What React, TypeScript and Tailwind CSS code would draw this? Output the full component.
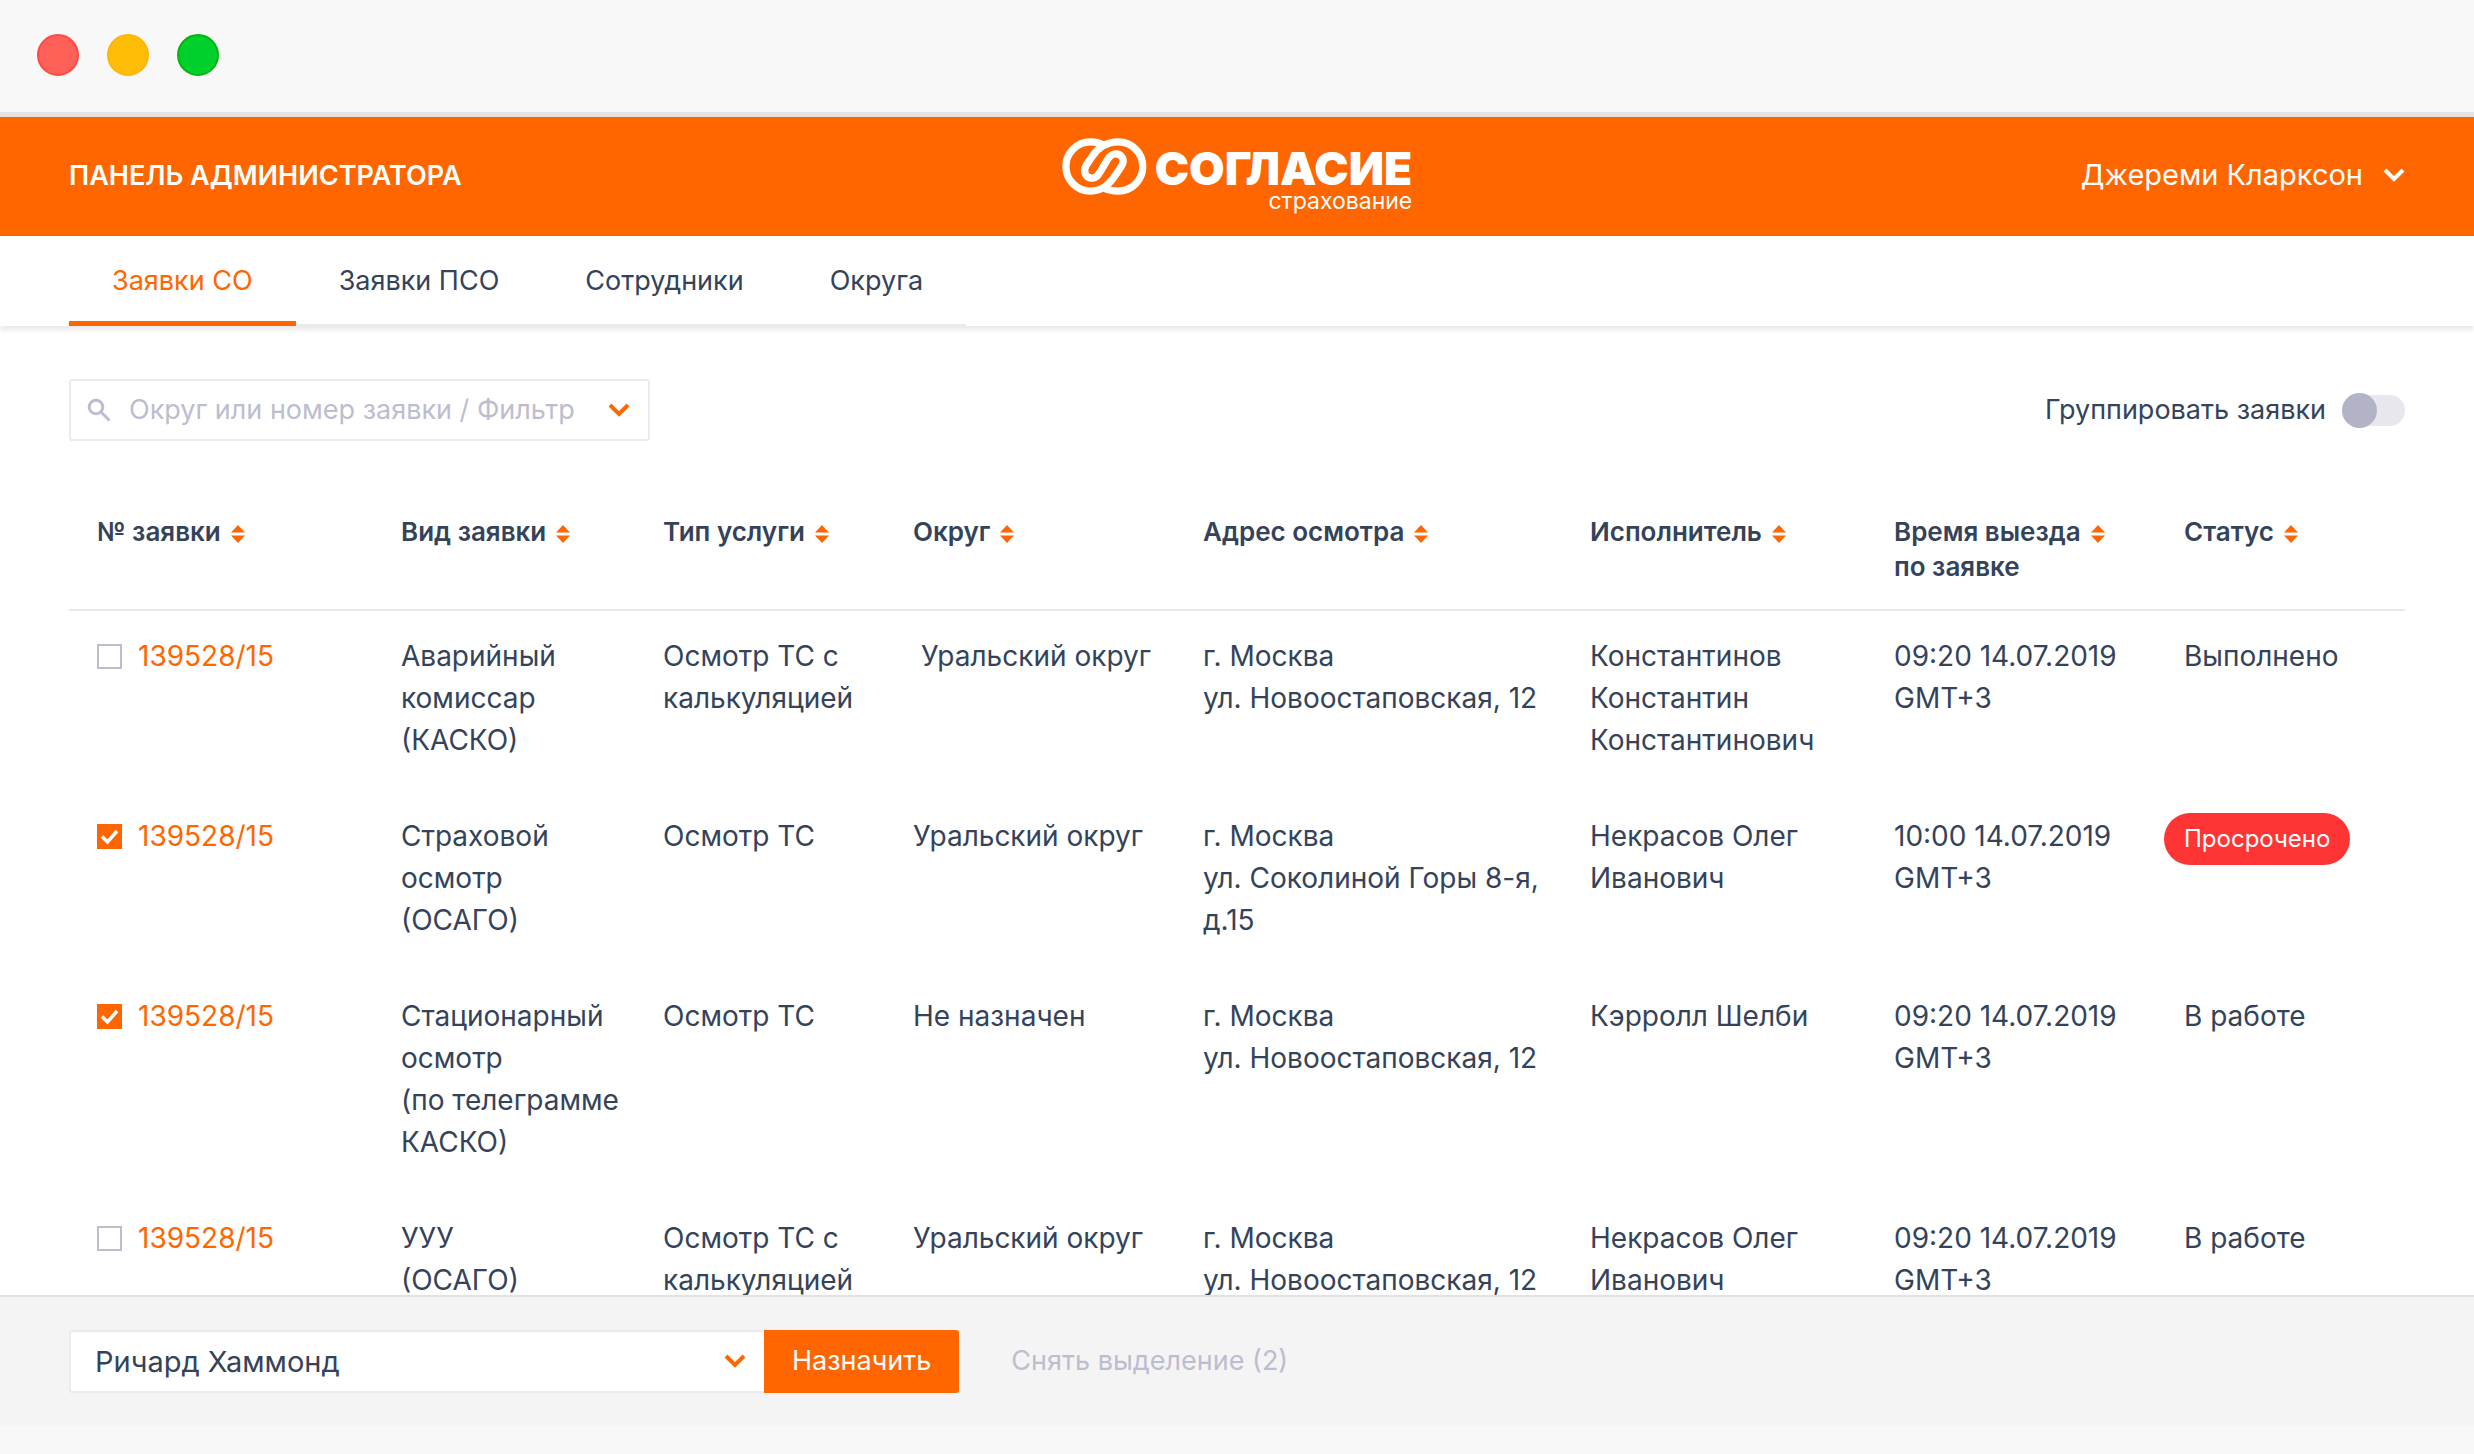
import { useState } from "react";
import clsx from "clsx";

type Request = {
  id: number;
  number: string;
  kind: string;
  service: string;
  district: string;
  address: string;
  assignee: string;
  time: string;
  status: string;
  overdue?: boolean;
};

const tabs = ["Заявки СО", "Заявки ПСО", "Сотрудники", "Округа"];

const columns = [
  { title: "№ заявки", width: "w-[332px]" },
  { title: "Вид заявки", width: "w-[262px]" },
  { title: "Тип услуги", width: "w-[250px]" },
  { title: "Округ", width: "w-[290px]" },
  { title: "Адрес осмотра", width: "w-[387px]" },
  { title: "Исполнитель", width: "w-[304px]" },
  { title: "Время выезда", subtitle: "по заявке", width: "w-[290px]" },
  { title: "Статус", width: "w-[221px]" },
];

const requests: Request[] = [
  {
    id: 1,
    number: "139528/15",
    kind: "Аварийный\nкомиссар\n(КАСКО)",
    service: "Осмотр ТС с\nкалькуляцией",
    district: "\u00a0Уральский округ",
    address: "г. Москва\nул. Новоостаповская, 12",
    assignee: "Константинов\nКонстантин\nКонстантинович",
    time: "09:20 14.07.2019\nGMT+3",
    status: "Выполнено",
  },
  {
    id: 2,
    number: "139528/15",
    kind: "Страховой\nосмотр\n(ОСАГО)",
    service: "Осмотр ТС",
    district: "Уральский округ",
    address: "г. Москва\nул. Соколиной Горы 8-я,\nд.15",
    assignee: "Некрасов Олег\nИванович",
    time: "10:00 14.07.2019\nGMT+3",
    status: "Просрочено",
    overdue: true,
  },
  {
    id: 3,
    number: "139528/15",
    kind: "Стационарный\nосмотр\n(по телеграмме\nКАСКО)",
    service: "Осмотр ТС",
    district: "Не назначен",
    address: "г. Москва\nул. Новоостаповская, 12",
    assignee: "Кэрролл Шелби",
    time: "09:20 14.07.2019\nGMT+3",
    status: "В работе",
  },
  {
    id: 4,
    number: "139528/15",
    kind: "УУУ\n(ОСАГО)",
    service: "Осмотр ТС с\nкалькуляцией",
    district: "Уральский округ",
    address: "г. Москва\nул. Новоостаповская, 12",
    assignee: "Некрасов Олег\nИванович",
    time: "09:20 14.07.2019\nGMT+3",
    status: "В работе",
  },
];

function Chevron({ className }: { className?: string }) {
  return (
    <svg
      viewBox="0 0 22 14"
      className={clsx("h-[14px] w-[22px] shrink-0", className)}
      fill="none"
      stroke="currentColor"
      strokeWidth="4"
      aria-hidden="true"
    >
      <path d="M2 2l9 9 9-9" />
    </svg>
  );
}

function SortIcon() {
  return (
    <svg
      viewBox="0 0 14 18"
      className="mt-1 h-[18px] w-[14px] text-[#ff6600]"
      fill="currentColor"
      aria-hidden="true"
    >
      <path d="M7 0l7 7.5H0zM7 18l7-7.5H0z" />
    </svg>
  );
}

function Logo() {
  return (
    <a href="#" className="flex items-start gap-2 pt-[21px]">
      <svg
        viewBox="28 22 255 172"
        className="h-[57px] w-[85px]"
        fill="none"
        stroke="currentColor"
        strokeWidth="22"
        aria-hidden="true"
      >
        <path d="M153 44C142 37 128 34 113 34A74 74 0 0 0 113 182C150 182 170 160 187 136L206 108C220 86 206 70 189 70C178 70 171 77 164 88L146 118C139 130 133 142 119 143C102 144 88 126 100 105L118 78C133 56 155 34 197 34A74 74 0 0 1 197 182C180 182 166 179 153 172" />
      </svg>
      <span className="flex flex-col items-end pt-[9px]">
        <span className="text-[46px] leading-[42px] font-black">СОГЛАСИЕ</span>
        <span className="text-[23px] leading-6">страхование</span>
      </span>
    </a>
  );
}

function Header() {
  return (
    <header className="grid h-[119px] grid-cols-[1fr_auto_1fr] bg-[#ff6600] px-[69px] text-white">
      <h1 className="self-center text-[27px] font-semibold">ПАНЕЛЬ АДМИНИСТРАТОРА</h1>
      <Logo />
      <button className="flex items-center gap-5 self-center justify-self-end pb-1 text-[29px]">
        Джереми Кларксон
        <Chevron />
      </button>
    </header>
  );
}

function Tabs() {
  return (
    <div className="relative flex h-[90px] bg-white px-[69px] shadow-[0_4px_5px_rgba(0,0,0,0.09)]">
      <nav className="flex shadow-[inset_0_-2px_0_#e9e9ee]">
        {tabs.map((tab, i) => (
          <a
            key={tab}
            href="#"
            className={clsx(
              "flex items-center border-b-[5px] px-[43px] pt-[6px] text-[27px]",
              i === 0 ? "border-[#ff6600] text-[#ff6600]" : "border-transparent"
            )}
          >
            {tab}
          </a>
        ))}
      </nav>
    </div>
  );
}

export default function App() {
  const [selected, setSelected] = useState<number[]>([2, 3]);

  const toggle = (id: number) =>
    setSelected((ids) => (ids.includes(id) ? ids.filter((i) => i !== id) : [...ids, id]));

  return (
    <div className="flex h-screen flex-col bg-[#f8f8f8] font-['Inter',sans-serif] text-[28px] text-[#34435a]">
      {/* Window bar */}
      <div className="flex h-[117px] shrink-0 items-center gap-7 border-b-[5px] border-[#e4e4e4] px-[37px] pb-[2px]">
        <span className="size-[42px] rounded-full border-2 border-[#ff4a44] bg-[#ff6159]" />
        <span className="size-[42px] rounded-full border-2 border-[#ffb40a] bg-[#ffbd08]" />
        <span className="size-[42px] rounded-full border-2 border-[#07b40c] bg-[#00d02b]" />
      </div>

      <Header />
      <Tabs />

      <main className="min-h-0 flex-1 overflow-hidden bg-white px-[69px] pt-[53px]">
        <div className="flex items-center justify-between text-[27px]">
          <div className="flex h-[62px] w-[581px] items-center rounded-[3px] border-2 border-[#ebebef] px-4">
            <svg
              viewBox="0 0 24 24"
              className="size-6 shrink-0 text-[#bdbdd0]"
              fill="none"
              stroke="currentColor"
              strokeWidth="3"
              aria-hidden="true"
            >
              <circle cx="9" cy="9" r="6.8" />
              <path d="M14 14l8.500 8.500" />
            </svg>
            <input
              type="text"
              aria-label="Поиск заявок"
              placeholder="Округ или номер заявки / Фильтр"
              className="min-w-0 flex-1 pl-[18px] outline-none placeholder:text-[#bdbdd0]"
            />
            <button aria-label="Открыть фильтр" className="px-[2px] text-[#ff6600]">
              <Chevron />
            </button>
          </div>

          <label className="flex items-center gap-4">
            Группировать заявки
            <input
              type="checkbox"
              role="switch"
              className="relative h-[31px] w-[63px] appearance-none rounded-full bg-[#e8e7ed] before:absolute before:-top-[2px] before:left-0 before:size-[35px] before:rounded-full before:bg-[#b2b3c6] checked:before:left-7 checked:before:bg-[#ff6600]"
            />
          </label>
        </div>

        <table className="mt-[73px] w-full table-fixed">
          <thead>
            <tr className="border-b-2 border-[#e9e9ec] text-left align-top text-[26px] leading-[35px]">
              {columns.map((column, i) => (
                <th
                  key={column.title}
                  className={clsx("pb-[25px] font-semibold", column.width, i === 0 && "pl-7")}
                >
                  <button className="flex items-center gap-[10px] whitespace-nowrap">
                    {column.title}
                    <SortIcon />
                  </button>
                  {column.subtitle}
                </th>
              ))}
            </tr>
          </thead>
          <tbody className="align-top leading-[42px] whitespace-pre-line">
            {requests.map((item) => (
              <tr key={item.id}>
                <td className="pt-6 pb-[30px] pl-7">
                  <div className="flex items-center gap-4">
                    <span className="relative size-[25px]">
                      <input
                        type="checkbox"
                        aria-label={`Выбрать заявку ${item.number}`}
                        checked={selected.includes(item.id)}
                        onChange={() => toggle(item.id)}
                        className="block size-[25px] appearance-none border-2 border-[#bdbdd0] checked:border-[#ff6600] checked:bg-[#ff6600]"
                      />
                      {selected.includes(item.id) && (
                        <svg
                          viewBox="0 0 25 25"
                          className="pointer-events-none absolute inset-0 size-[25px] text-white"
                          fill="none"
                          stroke="currentColor"
                          strokeWidth="3.500"
                          aria-hidden="true"
                        >
                          <path d="M5 12.500l5.500 5.500L20 7" />
                        </svg>
                      )}
                    </span>
                    <a href="#" className="text-[#ff6600]">
                      {item.number}
                    </a>
                  </div>
                </td>
                <td className="pt-6 pb-[30px]">{item.kind}</td>
                <td className="pt-6 pb-[30px]">{item.service}</td>
                <td className="pt-6 pb-[30px]">{item.district}</td>
                <td className="pt-6 pb-[30px]">{item.address}</td>
                <td className="pt-6 pb-[30px]">{item.assignee}</td>
                <td className="pt-6 pb-[30px]">{item.time}</td>
                <td className="pt-6 pb-[30px]">
                  {item.overdue ? (
                    <span className="-mt-[2px] -ml-5 inline-block rounded-full bg-[#ff3535] px-5 text-[24px] leading-[52px] text-white">
                      {item.status}
                    </span>
                  ) : (
                    item.status
                  )}
                </td>
              </tr>
            ))}
          </tbody>
        </table>
      </main>

      {/* Bulk actions */}
      <footer className="mb-7 flex h-[131px] shrink-0 items-center border-t-2 border-[#e2e2e4] bg-[#f4f4f4] px-[69px] text-[27px]">
        <div className="relative w-[695px]">
          <select
            aria-label="Исполнитель"
            className="h-[63px] w-full appearance-none rounded-l-[3px] border-2 border-r-0 border-[#ebebef] bg-white px-6 text-[29px]"
          >
            <option>Ричард Хаммонд</option>
            <option>Кэрролл Шелби</option>
          </select>
          <Chevron className="pointer-events-none absolute top-6 right-[18px] text-[#ff6600]" />
        </div>
        <button className="h-[63px] rounded-r-[3px] bg-[#ff6600] px-7 text-white">
          Назначить
        </button>
        <button className="ml-[52px] text-[#bdbdd0]" onClick={() => setSelected([])}>
          Снять выделение ({selected.length})
        </button>
      </footer>
    </div>
  );
}
